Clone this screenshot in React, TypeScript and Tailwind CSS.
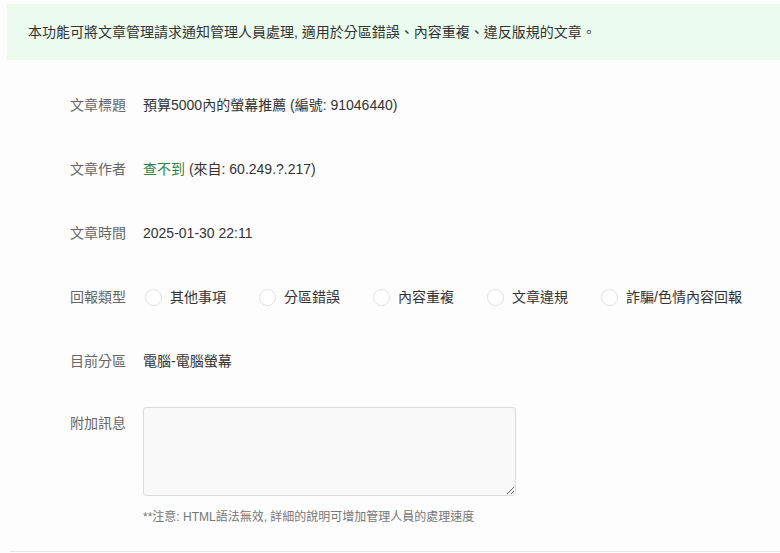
import { useState } from "react";

const types = ["其他事項", "分區錯誤", "內容重複", "文章違規", "詐騙/色情內容回報"];

function Row({ label, children }: { label: string; children: React.ReactNode }) {
  return (
    <div className="flex items-center h-16">
      <div className="w-[126px] shrink-0 text-right text-[#666]">{label}</div>
      <div className="pl-[17px] text-[#333]">{children}</div>
    </div>
  );
}

export default function App() {
  const [type, setType] = useState<string | null>(null);

  return (
    <div
      className="min-h-[553px] bg-[#fdfdfd] text-[14px] leading-5"
      style={{ fontFamily: '"Liberation Sans", "Noto Sans CJK TC", sans-serif' }}
    >
      <div className="pt-1 pl-[7px]">
        <div className="h-14 bg-[#ebfbef] flex items-center pl-[21px] text-[14px] text-[#333]">
          本功能可將文章管理請求通知管理人員處理, 適用於分區錯誤、內容重複、違反版規的文章。
        </div>
      </div>

      <div className="pt-[13px]">
        <Row label="文章標題">預算5000內的螢幕推薦 (編號: 91046440)</Row>
        <Row label="文章作者">
          <span className="text-[#2e8540]">查不到</span> (來自: 60.249.?.217)
        </Row>
        <Row label="文章時間">2025-01-30 22:11</Row>
        <Row label="回報類型">
          <div className="flex items-center ml-[2px]">
            {types.map((t) => (
              <label key={t} className="flex items-center w-[114px] shrink-0 cursor-pointer whitespace-nowrap">
                <span
                  onClick={() => setType(t)}
                  className="w-[17px] h-[17px] shrink-0 rounded-full border border-[#e0e0e0] bg-white mr-[8px] flex items-center justify-center"
                >
                  {type === t && <span className="w-[7px] h-[7px] rounded-full bg-[#2e8540]" />}
                </span>
                {t}
              </label>
            ))}
          </div>
        </Row>
        <Row label="目前分區">電腦-電腦螢幕</Row>

        <div className="flex pt-[14px]">
          <div className="w-[126px] shrink-0 text-right text-[#666] pt-[6px]">附加訊息</div>
          <div className="pl-[17px]">
            <textarea className="block w-[373px] h-[89px] rounded-[3px] border border-[#dcdcdc] bg-[#f9f9f9] outline-none p-2 text-[14px]" />
            <div className="mt-[11px] text-[12px] text-[#777]">**注意: HTML語法無效, 詳細的說明可增加管理人員的處理速度</div>
          </div>
        </div>
      </div>

      <div className="mt-[24px] ml-[10px] border-t border-[#e6e6e6]" />
    </div>
  );
}
